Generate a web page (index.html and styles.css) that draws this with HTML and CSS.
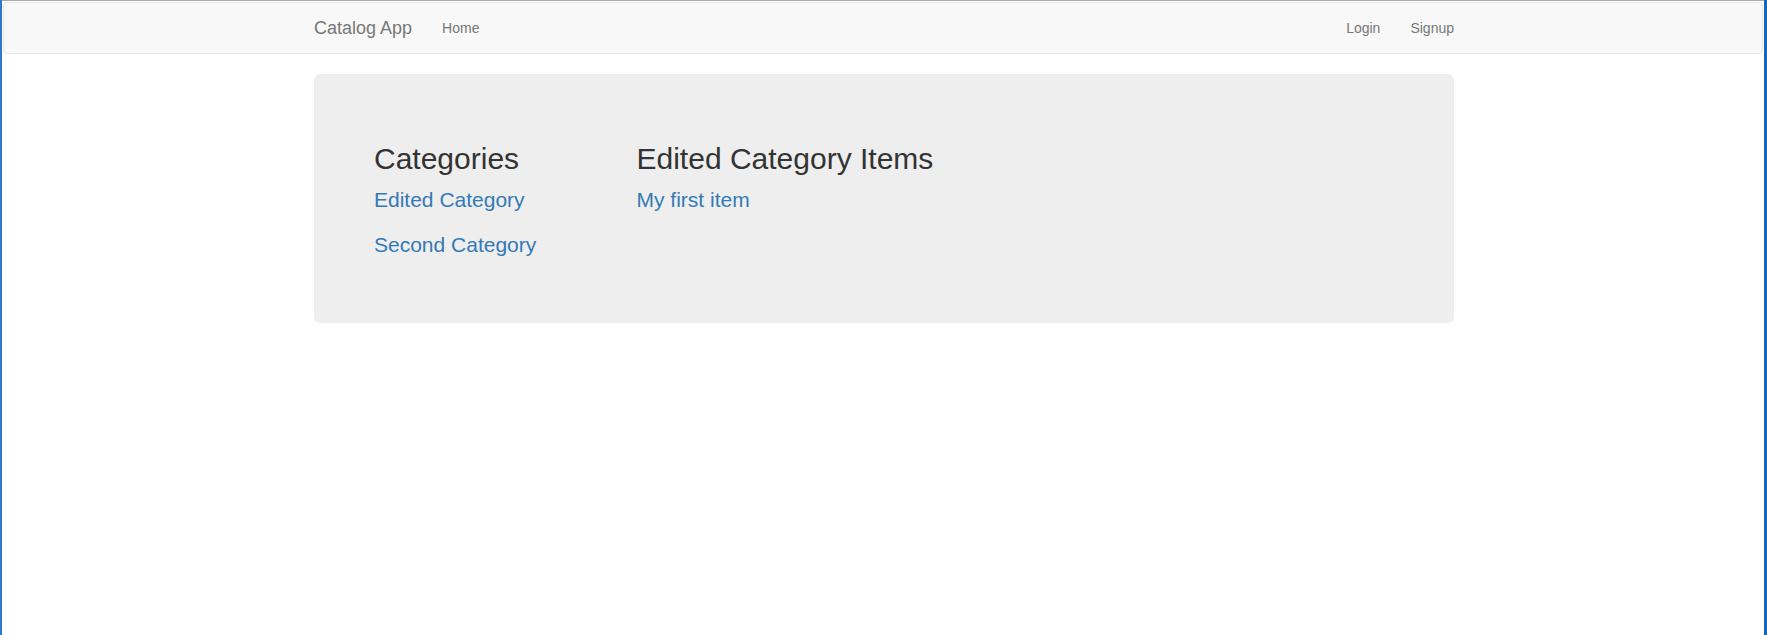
FILE: index.html
```html
<!DOCTYPE html>
<html lang="en">
<head>
<meta charset="utf-8">
<title>Catalog App</title>
<link rel="stylesheet" href="styles.css">
</head>
<body>
<div class="frame">
  <nav class="navbar">
    <div class="container nav-inner">
      <a class="brand" href="#">Catalog App</a>
      <ul class="nav">
        <li><a href="#">Home</a></li>
      </ul>
      <ul class="nav nav-right">
        <li><a href="#">Login</a></li>
        <li><a href="#">Signup</a></li>
      </ul>
    </div>
  </nav>
  <main class="container">
    <section class="jumbotron">
      <div class="cols">
        <div class="col">
          <h2>Categories</h2>
          <p><a href="#">Edited Category</a></p>
          <p><a href="#">Second Category</a></p>
        </div>
        <div class="col">
          <h2>Edited Category Items</h2>
          <p><a href="#">My first item</a></p>
        </div>
      </div>
    </section>
  </main>
</div>
</body>
</html>
```
FILE: styles.css
```css
* { box-sizing: border-box; }
html, body { margin: 0; padding: 0; background: #fff; }
body {
  font-family: "Liberation Sans", Arial, Helvetica, sans-serif;
  font-size: 14px;
  line-height: 1.42857;
  color: #333;
}
.frame {
  min-height: 635px;
  border-left: 2px solid #2b7bc9;
  border-right: 3px solid #1566b8;
  padding: 1px 1px 0 1px;
  box-shadow: inset 0 1px 0 #a8a8a8;
}
a { text-decoration: none; color: #337ab7; }
.container {
  width: 1170px;
  margin: 0 auto;
  padding: 0 14px 0 16px;
}
.navbar {
  margin-top: 1px;
  min-height: 50px;
  margin-bottom: 20px;
  background: #f8f8f8;
  border: 1px solid #e7e7e7;
  border-radius: 4px;
}
.nav-inner {
  display: flex;
  align-items: flex-start;
}
.brand {
  display: block;
  height: 50px;
  padding: 15px;
  margin-left: -15px;
  font-size: 18px;
  line-height: 20px;
  color: #777;
}
.nav {
  list-style: none;
  margin: 0;
  padding: 0;
  display: flex;
}
.nav a {
  display: block;
  padding: 15px;
  font-size: 14px;
  line-height: 20px;
  color: #777;
}
.nav-right {
  margin-left: auto;
  margin-right: -15px;
}
.jumbotron {
  background: #eee;
  border-radius: 6px;
  padding: 48px 60px;
}
.cols {
  display: grid;
  grid-template-columns: 262.5px 1fr;
  margin: 0 -15px;
}
.col {
  padding: 0 15px;
}
.col h2 {
  margin: 20px 0 10px;
  font-size: 30px;
  line-height: 1.1;
  font-weight: 500;
  color: #333;
}
.col p {
  margin: 0 0 15px;
  font-size: 21px;
  line-height: 30px;
  font-weight: 200;
}
```
